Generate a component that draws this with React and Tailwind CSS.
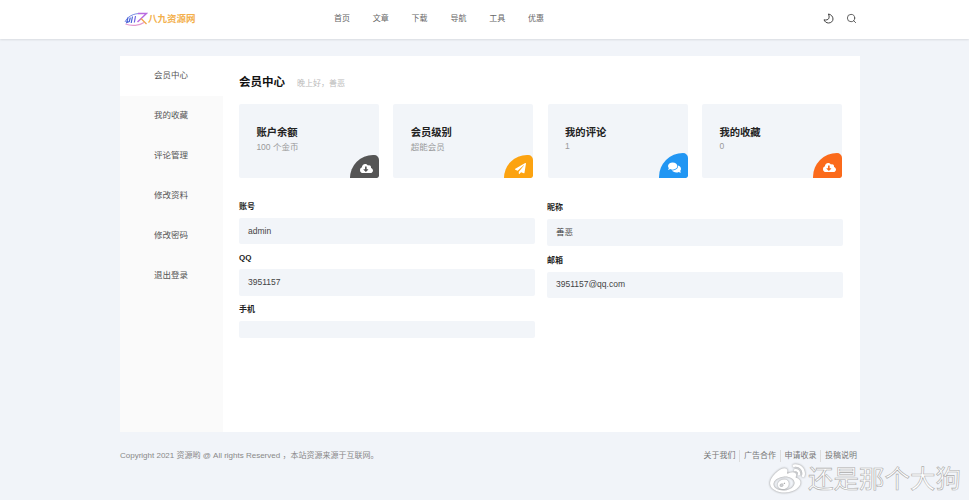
import React from "react";
import { FaCloudDownloadAlt, FaPaperPlane, FaComments, FaWeibo } from "react-icons/fa";
import { Search } from "lucide-react";

const nav = ["首页", "文章", "下载", "导航", "工具", "优惠"];
const side = ["会员中心", "我的收藏", "评论管理", "修改资料", "修改密码", "退出登录"];
const cards = [
  { t: "账户余额", s: "100 个金币", bg: "bg-[#555555]", h: "h-[23px]", gap: "mt-[1px]", I: FaCloudDownloadAlt, size: 13 },
  { t: "会员级别", s: "超能会员", bg: "bg-[#fca311]", h: "h-[23px]", gap: "mt-[1px]", I: FaPaperPlane, size: 11 },
  { t: "我的评论", s: "1", bg: "bg-[#2196f3]", h: "h-[25px]", gap: "mt-0", I: FaComments, size: 13 },
  { t: "我的收藏", s: "0", bg: "bg-[#fb6a1b]", h: "h-[25px]", gap: "mt-0", I: FaCloudDownloadAlt, size: 13 },
];
const left = [
  { l: "账号", v: "admin", h: "h-[26px]" },
  { l: "QQ", v: "3951157", h: "h-[27px]" },
  { l: "手机", v: "", h: "h-[17px]" },
];
const right = [
  { l: "昵称", v: "善恶", h: "h-[27px]" },
  { l: "邮箱", v: "3951157@qq.com", h: "h-[26px]" },
];

function Field({ l, v, h }) {
  return (
    <div>
      <div className="h-[12px] text-[8px] leading-[14px] font-bold text-[#222]">{l}</div>
      <div className={`mt-[6px] ${h} flex items-center rounded-[2px] bg-[#f2f5f9] pl-[9px] text-[8.5px] text-[#444]`}>{v}</div>
    </div>
  );
}

function Logo() {
  return (
    <div className="flex items-center">
      <svg width="24" height="16" viewBox="0 0 24 16" fill="none">
        <path d="M1 11C3 6 9 2 18 2.5" stroke="#6a7fe0" strokeWidth="0.9" />
        <path d="M4 6.5l-1.3 5 2.6-1 1-4M8.5 5.5l-1.3 6.5" stroke="#4a63d8" strokeWidth="1.2" />
        <path d="M11.5 5l-1.2 6.5" stroke="#6f62e0" strokeWidth="1.2" />
        <path d="M14 2.5h8.5l-9 8.5" stroke="#b96ae0" strokeWidth="1.5" />
        <path d="M1.5 13c6 2.4 14 1.6 18.5-1.5" stroke="#e59ad0" strokeWidth="1.2" />
        <path d="M17 7.5l5.5 5.5" stroke="#f0a44a" strokeWidth="1.3" />
      </svg>
      <span className="text-[9.5px] font-bold leading-none text-[#f3b04c]">八九资源网</span>
    </div>
  );
}

function Moon() {
  return (
    <svg width="11" height="11" viewBox="0 0 11 11" fill="none" stroke="#444" strokeWidth="1">
      <path d="M5.3 1C8 1.3 10 3.5 10 6 10 8.300 8 10 5.500 10 3.300 10 1.600 8.500 1 6.800 3.200 7.400 5.300 6.800 5.900 5.200 6.400 3.700 6 2.200 5.300 1Z" />
    </svg>
  );
}

export default function App() {
  return (
    <div className="relative h-[500px] overflow-hidden bg-[#f1f4f9] font-['Liberation_Sans','Noto_Sans_CJK_SC',sans-serif]">
      <header className="flex h-[39px] items-center bg-white pb-[2px] pl-[124px] pr-[112px] shadow-[0_1px_2px_rgba(0,0,0,0.1)]">
        <div className="w-[210px]"><Logo /></div>
        <nav className="flex gap-[22.8px] text-[8px] text-[#666]">
          {nav.map((n) => <span key={n} className="w-[16px] whitespace-nowrap">{n}</span>)}
        </nav>
        <div className="ml-auto flex items-center gap-[12px]">
          <Moon />
          <Search size={11} color="#444" strokeWidth={1.8} />
        </div>
      </header>

      <main className="ml-[120px] mt-[17px] flex h-[376px] w-[740px] bg-white">
        <aside className="w-[103px] bg-[#fafafa]">
          {side.map((s, i) => (
            <div key={s} className={`flex h-[40px] items-center justify-center pb-[2px] pr-[1px] text-[8.5px] text-[#555] ${i === 0 ? "bg-white" : ""}`}>{s}</div>
          ))}
        </aside>
        <section className="ml-[16px] w-[604px]">
          <div className="mt-[19px] flex h-[15px] items-center">
            <span className="text-[11.5px] font-bold text-[#111]">会员中心</span>
            <span className="ml-[12px] mt-[2px] text-[8px] text-[#bbb]">晚上好，善恶</span>
          </div>
          <div className="mt-[14px] grid h-[74px] w-[603px] grid-cols-4 gap-x-[14.33px]">
            {cards.map((c) => (
              <div key={c.t} className="relative overflow-hidden rounded-[2px] bg-[#f2f5f9] pl-[17.4px] pt-[22px]">
                <div className="text-[10.3px] font-bold leading-[14px] text-[#222]">{c.t}</div>
                <div className={`${c.gap} text-[8.5px] leading-[12px] text-[#999]`}>{c.s}</div>
                <div className={`absolute bottom-0 right-0 flex w-[29px] ${c.h} items-center justify-center rounded-tl-[24px] rounded-tr-[5px] rounded-br-[2px] pl-[3px] pt-[3px] text-white ${c.bg}`}>
                  <c.I size={c.size} />
                </div>
              </div>
            ))}
          </div>
          <div className="mt-[22px] flex items-start gap-[12px]">
            <div className="flex w-[296px] flex-col gap-[7px]">
              {left.map((f) => <Field key={f.l} {...f} />)}
            </div>
            <div className="flex w-[296px] flex-col gap-[8px] pt-[0.5px]">
              {right.map((f) => <Field key={f.l} {...f} />)}
            </div>
          </div>
        </section>
      </main>

      <footer className="ml-[120px] mt-[18px] flex w-[737px] items-center justify-between text-[8px] leading-[12px] text-[#888]">
        <span>Copyright 2021 资源哟 @ All rights Reserved ，本站资源来源于互联网。</span>
        <div className="flex text-[#777]">
          {["关于我们", "广告合作", "申请收录", "投稿说明"].map((t, i) => (
            <span key={t} className={`px-[3.75px] ${i < 3 ? "border-r border-[#ddd]" : "pr-0"}`}>{t}</span>
          ))}
        </div>
      </footer>

      <div className="absolute left-[770px] top-[462px] flex items-center">
        <FaWeibo size={35} className="text-white [filter:drop-shadow(0_0_1px_#888)]" />
        <span className="ml-[3px] text-[25.5px] leading-none text-white [-webkit-text-stroke:0.6px_#aaa]">还是那个大狗</span>
      </div>
    </div>
  );
}
